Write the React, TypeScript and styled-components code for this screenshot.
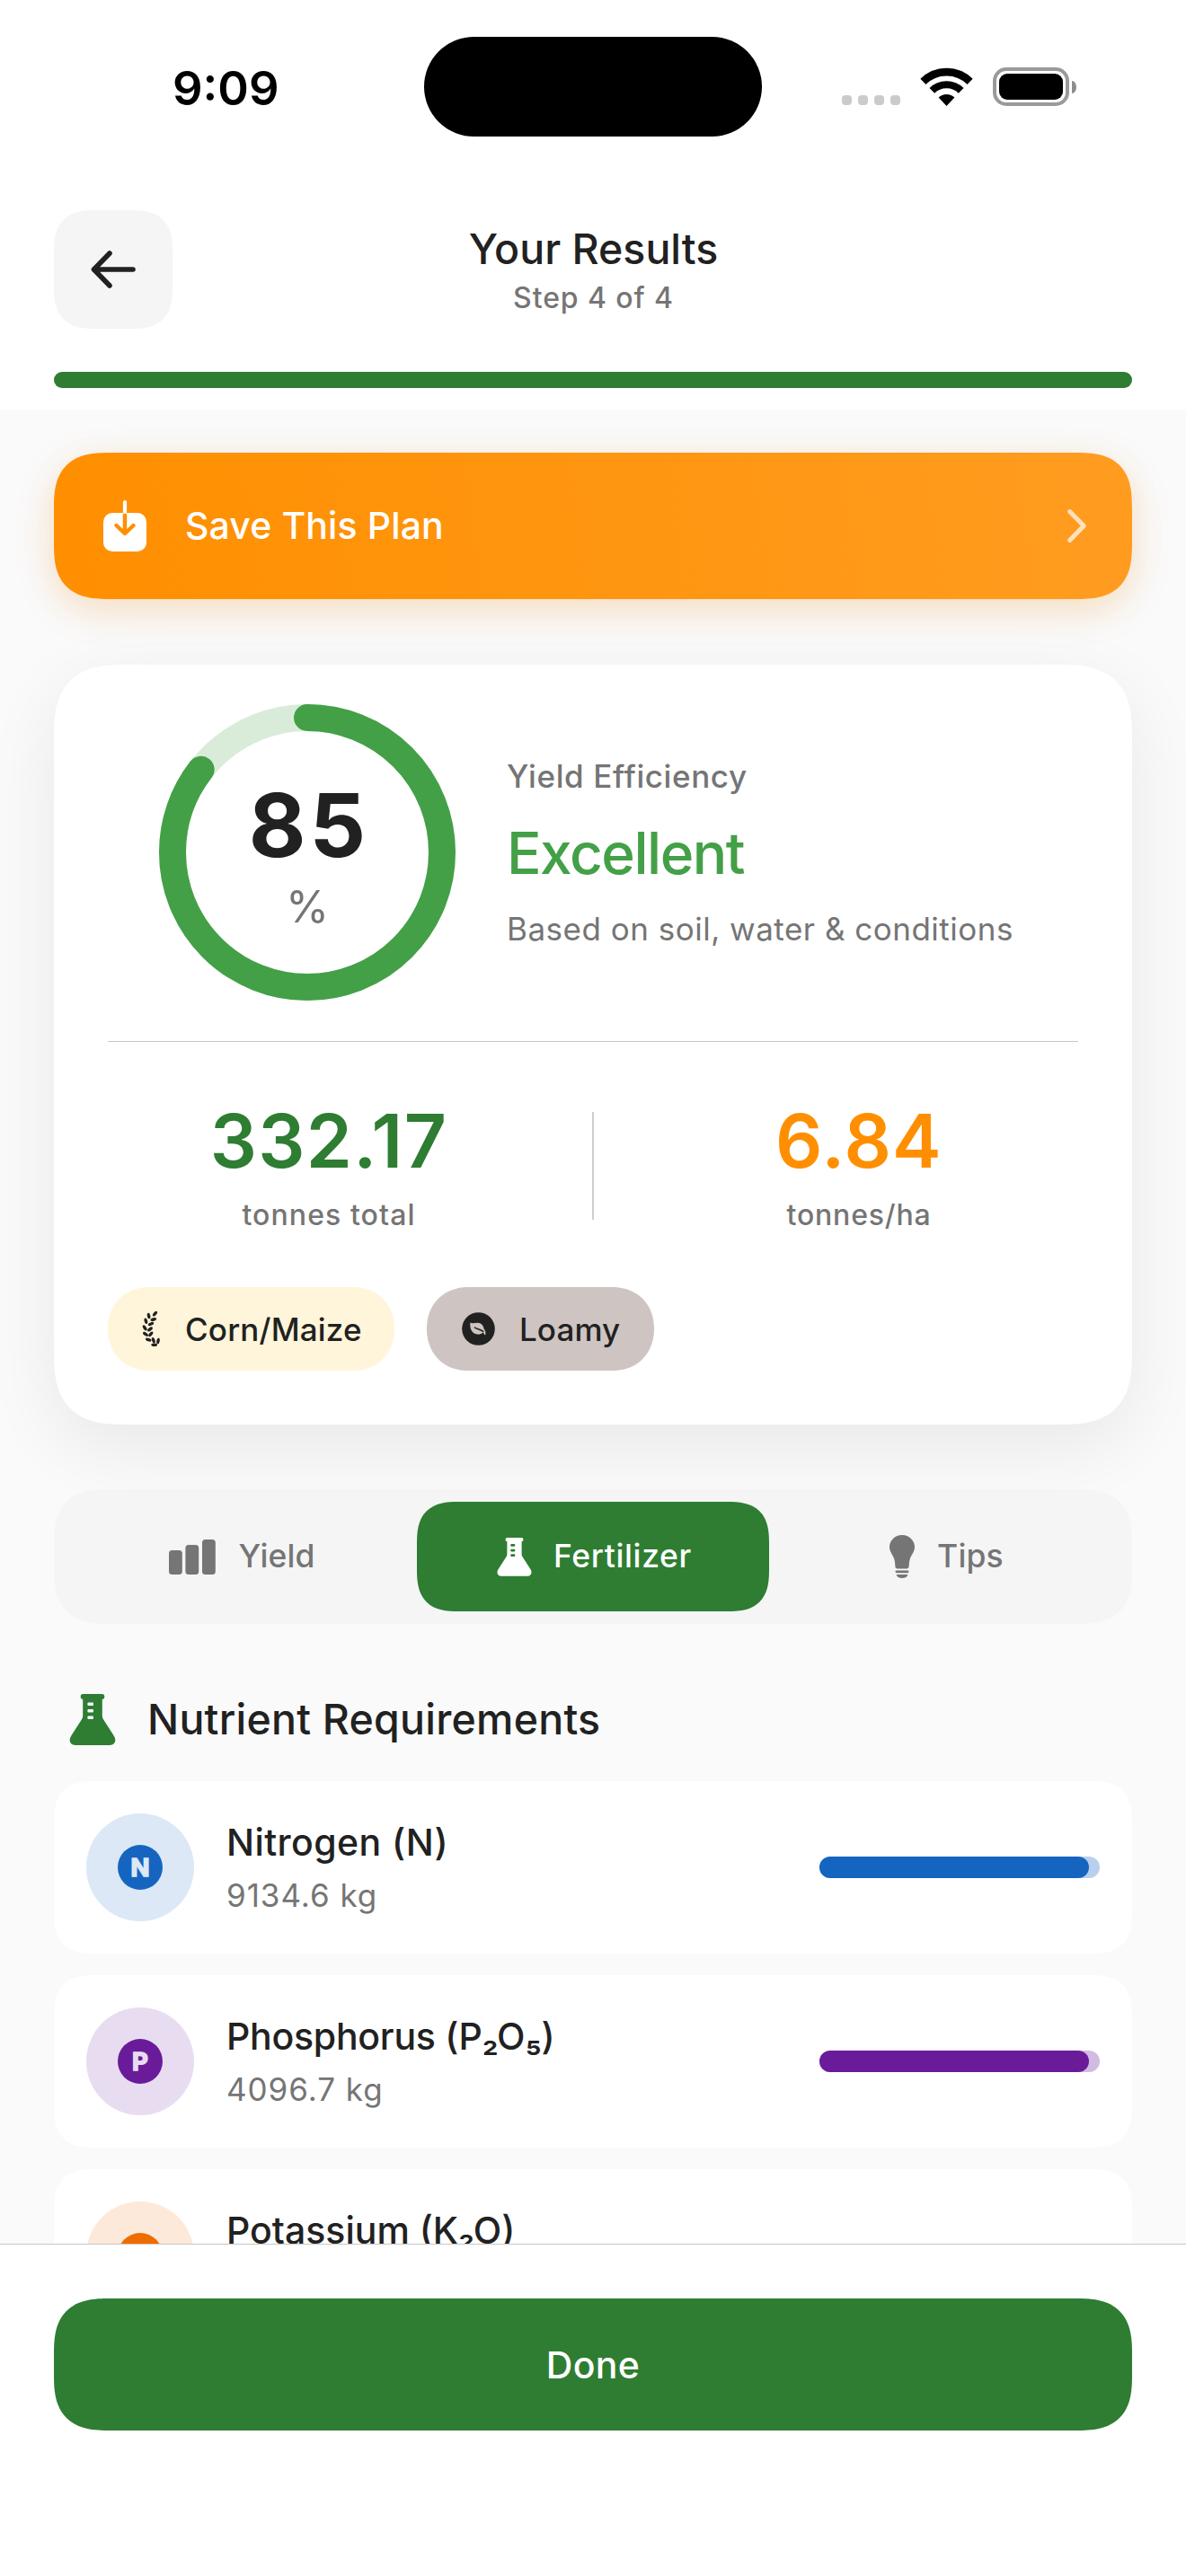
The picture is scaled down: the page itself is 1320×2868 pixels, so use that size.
import React from "react";
import styled, { createGlobalStyle } from "styled-components";

const color = {
  ink: "#212121",
  muted: "#757575",
  green: "#2e7d32",
  lightGreen: "#43a047",
  orange: "#ff8f00",
  page: "#fafafa",
  panel: "#f5f5f5",
  line: "#c6c6c6",
};

const GlobalStyle = createGlobalStyle`
  *, *::before, *::after { box-sizing: border-box; }
  body {
    margin: 0;
    background: #fff;
    color: ${color.ink};
    font-family: Inter, "Liberation Sans", sans-serif;
    -webkit-font-smoothing: antialiased;
  }
  button { font: inherit; color: inherit; border: 0; padding: 0; background: none; }
  svg { display: block; flex: none; overflow: visible; }
`;

/* Text: the cap height sits at the middle of the line box */
const Text = styled.span<{
  $size: number;
  $line: number;
  $weight?: number;
  $color?: string;
  $track?: number;
}>`
  display: block;
  margin: 0;
  white-space: nowrap;
  font-size: ${(p) => p.$size}px;
  line-height: ${(p) => p.$line}px;
  font-weight: ${(p) => p.$weight ?? 500};
  color: ${(p) => p.$color ?? color.ink};
  letter-spacing: ${(p) => p.$track ?? 0}px;
`;

const Screen = styled.div`
  width: 1320px;
  height: 2868px;
  display: flex;
  flex-direction: column;
  background: #fff;
  overflow: hidden;
`;

/* ---------- Header ---------- */

const StatusBar = styled.div`
  flex: none;
  height: 186px;
  padding: 0 122px 0 192px;
  display: grid;
  grid-template-columns: 280px 376px 1fr;
  align-items: start;
`;

const Clock = styled(Text)`
  margin-top: 68px;
`;

const Island = styled.div`
  height: 111px;
  margin-top: 41px;
  border-radius: 56px;
  background: #000;
`;

const StatusIcons = styled.div`
  display: flex;
  justify-content: flex-end;
  align-items: flex-end;
  height: 43px;
  margin-top: 75px;
`;

const SignalDots = styled.div`
  display: flex;
  gap: 7px;
  margin: 0 23px 1px 0;
`;

const SignalDot = styled.i`
  width: 11px;
  height: 11px;
  border-radius: 4px;
  background: #cbcbcb;
`;

const Battery = styled.div`
  display: flex;
  align-items: center;
  gap: 3px;
  margin-left: 23px;
`;

const BatteryShell = styled.div`
  width: 85px;
  height: 43px;
  padding: 3px;
  border: 4px solid #9a9a9a;
  border-radius: 15px;
`;

const BatteryLevel = styled.div`
  height: 100%;
  border-radius: 9px;
  background: #000;
`;

const BatteryCap = styled.div`
  width: 5px;
  height: 14px;
  border-radius: 0 5px 5px 0 / 0 7px 7px 0;
  background: #8c8c8c;
`;

const NavBar = styled.header`
  flex: none;
  height: 132px;
  margin: 48px 60px 0;
  display: grid;
  grid-template-columns: 132px 1fr 132px;
  grid-template-rows: 132px;
`;

const BackButton = styled.button`
  display: flex;
  align-items: center;
  justify-content: center;
  border-radius: 47px;
  corner-shape: superellipse(1.44);
  background: ${color.panel};
`;

const TitleBlock = styled.div`
  display: flex;
  flex-direction: column;
  align-items: center;
  gap: 1px;
  padding: 13px 0 0 1px;
`;

const StepProgress = styled.div`
  flex: none;
  height: 18px;
  margin: 48px 60px 24px;
  border-radius: 9px;
  background: ${color.green};
`;

/* ---------- Scrolling content ---------- */

const Content = styled.main`
  flex: 1;
  min-height: 0;
  overflow: hidden;
  padding: 48px 60px 0;
  background: ${color.page};
`;

const SaveButton = styled.button`
  width: 100%;
  height: 163px;
  display: flex;
  align-items: center;
  padding: 0 51px 0 55px;
  border-radius: 62px;
  corner-shape: superellipse(1.44);
  background: linear-gradient(82deg, #ff8f00, #ff9c20);
  box-shadow:
    0 12px 40px rgba(255, 143, 0, 0.22),
    0 10px 60px rgba(0, 0, 0, 0.03);
`;

const SaveLabel = styled(Text)`
  flex: 1;
  margin-left: 43px;
  padding-bottom: 1px;
  text-align: left;
`;

const SummaryCard = styled.section`
  margin-top: 73px;
  padding: 44px 60px 60px;
  border-radius: 80px;
  corner-shape: superellipse(1.44);
  background: #fff;
  box-shadow: 0 24px 80px rgba(0, 0, 0, 0.075);
`;

const ScoreRow = styled.div`
  display: flex;
  align-items: center;
  gap: 57px;
  padding-left: 57px;
`;

const Gauge = styled.div`
  display: grid;
  width: 330px;
  height: 330px;
  > * { grid-area: 1 / 1; }
`;

const GaugeLabel = styled.div`
  display: flex;
  flex-direction: column;
  align-items: center;
  gap: 13px;
  padding-top: 86px;
`;

const GaugeValue = styled(Text)`
  margin-right: -4px;
`;

const Rating = styled.div`
  display: flex;
  flex-direction: column;
`;

const RatingValue = styled(Text)`
  margin: 24px 0 22px;
`;

const Divider = styled.div`
  height: 1px;
  margin-top: 45px;
  background: ${color.line};
`;

const Stats = styled.div`
  display: flex;
  align-items: center;
  gap: 49px;
  margin-top: 60px;
`;

const Stat = styled.div`
  flex: 1;
  display: flex;
  flex-direction: column;
  align-items: center;
  gap: 12px;
  padding: 1px 0 0 2px;
`;

const StatRule = styled.div`
  width: 2px;
  height: 120px;
  margin-top: 2px;
  background: #cdcdcd;
`;

const Chips = styled.div`
  display: flex;
  gap: 36px;
  margin-top: 60px;
`;

const Chip = styled.div<{ $bg: string; $width: number; $gap: number }>`
  width: ${(p) => p.$width}px;
  height: 93px;
  display: flex;
  align-items: center;
  gap: ${(p) => p.$gap}px;
  padding-left: 39px;
  border-radius: 52px;
  corner-shape: superellipse(1.1);
  background: ${(p) => p.$bg};
`;

/* ---------- Tabs ---------- */

const Tabs = styled.nav`
  display: grid;
  grid-template-columns: repeat(3, 1fr);
  height: 150px;
  margin-top: 72px;
  padding: 14px 12px;
  border-radius: 62px;
  corner-shape: superellipse(1.44);
  background: ${color.panel};
`;

const Tab = styled.button<{ $active?: boolean; $gap: number }>`
  display: flex;
  align-items: center;
  justify-content: center;
  gap: ${(p) => p.$gap}px;
  padding-left: 3px;
  border-radius: 47px;
  corner-shape: superellipse(1.44);
  color: ${(p) => (p.$active ? "#fff" : color.muted)};
  background: ${(p) => (p.$active ? color.green : "transparent")};
`;

/* ---------- Nutrients ---------- */

const SectionHeading = styled.div`
  display: flex;
  align-items: center;
  gap: 35px;
  margin-top: 76px;
  padding-left: 17px;
  color: ${color.green};
`;

const NutrientList = styled.div`
  display: flex;
  flex-direction: column;
  gap: 24px;
  margin-top: 39px;
`;

const NutrientRow = styled.div`
  height: 192px;
  flex: none;
  display: flex;
  align-items: center;
  gap: 36px;
  padding: 0 36px;
  border-radius: 47px;
  corner-shape: superellipse(1.44);
  background: #fff;
`;

const NutrientHalo = styled.div<{ $bg: string }>`
  width: 120px;
  height: 120px;
  flex: none;
  display: flex;
  align-items: center;
  justify-content: center;
  border-radius: 50%;
  background: ${(p) => p.$bg};
`;

const NutrientBadge = styled.div<{ $bg: string; $ink: string }>`
  width: 50px;
  height: 50px;
  border-radius: 50%;
  background: ${(p) => p.$bg};
  color: ${(p) => p.$ink};
  font-size: 27.5px;
  font-weight: 700;
  line-height: 50px;
  text-align: center;
  -webkit-text-stroke: 1.6px ${(p) => p.$ink};
  stroke-linejoin: round;
`;

const NutrientInfo = styled.div`
  flex: 1;
  display: flex;
  flex-direction: column;
  gap: 10px;
  padding-bottom: 2px;
`;

const Amount = styled(Text)`
  min-height: 44px;
`;

const Meter = styled.div<{ $bg: string }>`
  width: 312px;
  height: 24px;
  border-radius: 12px;
  background: ${(p) => p.$bg};
`;

const MeterFill = styled.div<{ $bg: string }>`
  height: 100%;
  border-radius: 12px;
  background: ${(p) => p.$bg};
`;

/* ---------- Footer ---------- */

const Footer = styled.footer`
  flex: none;
  height: 370px;
  padding: 60px 60px 0;
  border-top: 1px solid ${color.line};
  background: #fff;
`;

const DoneButton = styled.button`
  width: 100%;
  height: 147px;
  display: flex;
  align-items: center;
  justify-content: center;
  border-radius: 62px;
  corner-shape: superellipse(1.44);
  background: ${color.green};
`;

/* ---------- Icons ---------- */

const WifiIcon = () => (
  <svg width="57" height="42" viewBox="0 0 57 42">
    <path d="M2.4 14.9A37 37 0 0 1 54.6 14.9" fill="none" stroke="#000" strokeWidth="8.6" />
    <path d="M12.3 24.8A23 23 0 0 1 44.7 24.8" fill="none" stroke="#000" strokeWidth="8" />
    <path d="M28.5 42L19.6 32.6A13 13 0 0 1 37.4 32.6Z" />
  </svg>
);

const ArrowLeftIcon = () => (
  <svg width="50" height="42" viewBox="0 0 50 42">
    <path
      d="M47 21H3.5M21 3L3.5 21L21 39"
      fill="none"
      stroke={color.ink}
      strokeWidth="5.6"
      strokeLinecap="round"
      strokeLinejoin="round"
    />
  </svg>
);

const SaveIcon = () => (
  <svg width="48" height="57" viewBox="0 0 48 57">
    <rect y="14" width="48" height="43" rx="10" fill="#fff" />
    <path
      d="M24 16V36.5M14.5 28L24 37L33.5 28"
      fill="none"
      stroke={color.orange}
      strokeWidth="4.4"
      strokeLinecap="round"
      strokeLinejoin="round"
    />
    <path d="M24 2.2V13" stroke="#fff" strokeWidth="4.2" strokeLinecap="round" />
  </svg>
);

const ChevronIcon = () => (
  <svg width="21" height="37" viewBox="0 0 21 37">
    <path
      d="M2.6 2.6L18.3 18.5L2.6 34.4"
      fill="none"
      stroke="#fff"
      strokeOpacity="0.7"
      strokeWidth="5"
      strokeLinecap="round"
      strokeLinejoin="round"
    />
  </svg>
);

// x, y, rotation of every leaf on the sprig
const leaves: [number, number, number][] = [
  [13.5, 2.7, -50], [6.6, 5, 80], [11.8, 9, -18], [3.4, 10.8, 75], [9, 14, -22],
  [2.2, 18.4, 55], [8, 19.8, -38], [3, 25.4, 35], [8.8, 25.4, -50],
  [6.2, 31.6, 20], [11.8, 32.2, 72], [17, 33, -80], [12.7, 37.3, 2],
];

const SprigIcon = () => (
  <svg width="19" height="39" viewBox="0 0 19 39" fill={color.ink}>
    {leaves.map(([x, y, r], i) => (
      <ellipse key={i} cx={x} cy={y} rx="3.4" ry="1.75" transform={`rotate(${r} ${x} ${y})`} />
    ))}
  </svg>
);

const LeafIcon = ({ cut }: { cut: string }) => (
  <svg width="37" height="37" viewBox="0 0 37 37">
    <circle cx="18.5" cy="18.5" r="18.3" fill={color.ink} />
    <path
      d="M9.4 11.6C11.5 13 14.4 11.8 17.6 11.8C21.8 11.9 24 14.6 24.6 18.6C26 20.2 26.8 22.6 26.4 24.4C26 25.6 25 25.3 24.8 24.2C24.5 23.4 24.1 22.8 23.6 22.6C21.8 24.4 19.4 25 17 24.6C11.6 23.8 8.6 19 9.4 11.6Z"
      fill={cut}
    />
    <path
      d="M14.4 17C16.6 19 20.2 18.6 23.8 21.4"
      fill="none"
      stroke={color.ink}
      strokeWidth="1.5"
      strokeLinecap="round"
    />
  </svg>
);

const BarsIcon = () => (
  <svg width="52" height="39" viewBox="0 0 52 39" fill="currentColor">
    <rect y="12" width="14.8" height="27" rx="3.5" />
    <rect x="18.4" y="6" width="14.8" height="33" rx="3.5" />
    <rect x="37" width="14.8" height="39" rx="3.5" />
  </svg>
);

const FlaskIcon = ({ width }: { width: number }) => (
  <svg width={width} height={(width * 57) / 52} viewBox="0 0 52 57" fill="currentColor" fillRule="evenodd">
    <path d="M15.5 0H36.5Q39.3 0 39.3 2.9Q39.3 5.6 36.8 5.8V24C36.8 26 37.2 26.8 38 28.2L49.6 46.2C53.4 52 50.6 57 44.6 57H7.4C1.4 57 -1.4 52 2.4 46.2L14 28.2C14.8 26.8 15.2 26 15.2 24V5.8Q12.7 5.6 12.7 2.9Q12.7 0 15.5 0ZM21.5 9.4Q20.4 9.4 20.4 10.4V12Q20.4 13 21.5 13H26Q27 13 27 12V10.4Q27 9.4 26 9.4ZM21.5 17Q20.4 17 20.4 18V19.6Q20.4 20.6 21.5 20.6H26Q27 20.6 27 19.6V18Q27 17 26 17ZM21.5 24.4Q20.4 24.4 20.4 25.4V27Q20.4 28 21.5 28H26Q27 28 27 27V25.4Q27 24.4 26 24.4Z" />
  </svg>
);

const BulbIcon = () => (
  <svg width="28" height="48" viewBox="0 0 28 48" fill="currentColor">
    <path d="M14 0C21.8 0 28 6 28 13.4C28 18.6 24.6 21.4 23 26C22 29 21.8 32 21.6 35C21.5 36.7 20.8 37.4 19.2 37.4H8.8C7.2 37.4 6.5 36.7 6.4 35C6.2 32 6 29 5 26C3.4 21.4 0 18.6 0 13.4C0 6 6.2 0 14 0Z" />
    <rect x="6.5" y="39.4" width="15" height="2.8" rx="1.4" />
    <path d="M7.6 44H20.4C20 46.6 17.4 48 14 48C10.6 48 8 46.6 7.6 44Z" />
  </svg>
);

const RADIUS = 150;
const LENGTH = 2 * Math.PI * RADIUS;

const EfficiencyGauge = ({ value }: { value: number }) => (
  <Gauge>
    <svg width="330" height="330" viewBox="0 0 330 330" fill="none" strokeWidth="30">
      <circle cx="165" cy="165" r={RADIUS} stroke="#d9ecda" />
      <circle
        cx="165"
        cy="165"
        r={RADIUS}
        stroke={color.lightGreen}
        strokeLinecap="round"
        strokeDasharray={`${(LENGTH * value) / 100} ${LENGTH}`}
        transform="rotate(-90 165 165)"
      />
    </svg>
    <GaugeLabel>
      <GaugeValue $size={98} $line={97} $weight={700} $track={4}>{Math.floor(value)}</GaugeValue>
      <Text $size={49} $line={60} $weight={400} $color={color.muted}>%</Text>
    </GaugeLabel>
  </Gauge>
);

interface Nutrient {
  symbol: string;
  name: string;
  amount?: string;
  nameTrack: number;
  tint: string;
  halo: string;
  track: string;
  level: number;
}

const nutrients: Nutrient[] = [
  { symbol: "N", name: "Nitrogen (N)", amount: "9134.6 kg", nameTrack: 0.42, tint: "#1565c0", halo: "#dce8f6", track: "#b9d0ec", level: 300 / 312 },
  { symbol: "P", name: "Phosphorus (P₂O₅)", amount: "4096.7 kg", nameTrack: -0.25, tint: "#6a1b9a", halo: "#e8ddf0", track: "#d2bbe1", level: 300 / 312 },
  { symbol: "K", name: "Potassium (K₂O)", nameTrack: 0, tint: "#ef6c00", halo: "#fde9da", track: "#fad3b3", level: 300 / 312 },
];

export default function App() {
  return (
    <>
      <GlobalStyle />
      <Screen>
        <StatusBar>
          <Clock $size={52.5} $line={60} $weight={600} $color="#000">9:09</Clock>
          <Island />
          <StatusIcons>
            <SignalDots>
              <SignalDot /><SignalDot /><SignalDot /><SignalDot />
            </SignalDots>
            <WifiIcon />
            <Battery>
              <BatteryShell><BatteryLevel /></BatteryShell>
              <BatteryCap />
            </Battery>
          </StatusIcons>
        </StatusBar>

        <NavBar>
          <BackButton aria-label="Back"><ArrowLeftIcon /></BackButton>
          <TitleBlock>
            <Text as="h1" $size={46.5} $line={60}>Your Results</Text>
            <Text $size={32} $line={48} $color={color.muted} $track={0.9}>Step 4 of 4</Text>
          </TitleBlock>
        </NavBar>
        <StepProgress />

        <Content>
          <SaveButton>
            <SaveIcon />
            <SaveLabel $size={41} $line={54} $color="#fff" $track={0.11}>Save This Plan</SaveLabel>
            <ChevronIcon />
          </SaveButton>

          <SummaryCard>
            <ScoreRow>
              <EfficiencyGauge value={85.5} />
              <Rating>
                <Text $size={35} $line={44} $color={color.muted} $track={0.6}>Yield Efficiency</Text>
                <RatingValue $size={64} $line={80} $color={color.lightGreen} $track={-1.5}>Excellent</RatingValue>
                <Text $size={35} $line={44} $weight={400} $color={color.muted} $track={0.5}>
                  Based on soil, water &amp; conditions
                </Text>
              </Rating>
            </ScoreRow>
            <Divider />
            <Stats>
              <Stat>
                <Text $size={82} $line={100} $weight={600} $color={color.green} $track={1.4}>332.17</Text>
                <Text $size={32} $line={40} $color={color.muted} $track={1.08}>tonnes total</Text>
              </Stat>
              <StatRule />
              <Stat>
                <Text $size={82} $line={100} $weight={600} $color={color.orange} $track={1.2}>6.84</Text>
                <Text $size={32} $line={40} $color={color.muted} $track={0.81}>tonnes/ha</Text>
              </Stat>
            </Stats>
            <Chips>
              <Chip $bg="#fff5da" $width={319} $gap={28}>
                <SprigIcon />
                <Text $size={35} $line={44} $track={0.18}>Corn/Maize</Text>
              </Chip>
              <Chip $bg="#cec5c2" $width={253} $gap={27}>
                <LeafIcon cut="#cec5c2" />
                <Text $size={35} $line={44} $track={0.08}>Loamy</Text>
              </Chip>
            </Chips>
          </SummaryCard>

          <Tabs>
            <Tab $gap={25}>
              <BarsIcon />
              <Text $size={35.5} $line={44} $color="inherit" $track={0.11}>Yield</Text>
            </Tab>
            <Tab $active $gap={24}>
              <FlaskIcon width={39} />
              <Text $size={35.5} $line={44} $color="inherit" $track={0.63}>Fertilizer</Text>
            </Tab>
            <Tab $gap={25}>
              <BulbIcon />
              <Text $size={35.5} $line={44} $color="inherit" $track={0.15}>Tips</Text>
            </Tab>
          </Tabs>

          <SectionHeading>
            <FlaskIcon width={52} />
            <Text as="h2" $size={46.5} $line={60} $track={0.23}>Nutrient Requirements</Text>
          </SectionHeading>

          <NutrientList>
            {nutrients.map((n) => (
              <NutrientRow key={n.symbol}>
                <NutrientHalo $bg={n.halo}>
                  <NutrientBadge $bg={n.tint} $ink={n.halo}>{n.symbol}</NutrientBadge>
                </NutrientHalo>
                <NutrientInfo>
                  <Text $size={41} $line={54} $track={n.nameTrack}>{n.name}</Text>
                  <Amount $size={35} $line={44} $weight={400} $color={color.muted} $track={0.95}>
                    {n.amount}
                  </Amount>
                </NutrientInfo>
                <Meter $bg={n.track}>
                  <MeterFill $bg={n.tint} style={{ width: `${n.level * 100}%` }} />
                </Meter>
              </NutrientRow>
            ))}
          </NutrientList>
        </Content>

        <Footer>
          <DoneButton>
            <Text $size={41} $line={54} $color="#fff" $track={0.33}>Done</Text>
          </DoneButton>
        </Footer>
      </Screen>
    </>
  );
}
